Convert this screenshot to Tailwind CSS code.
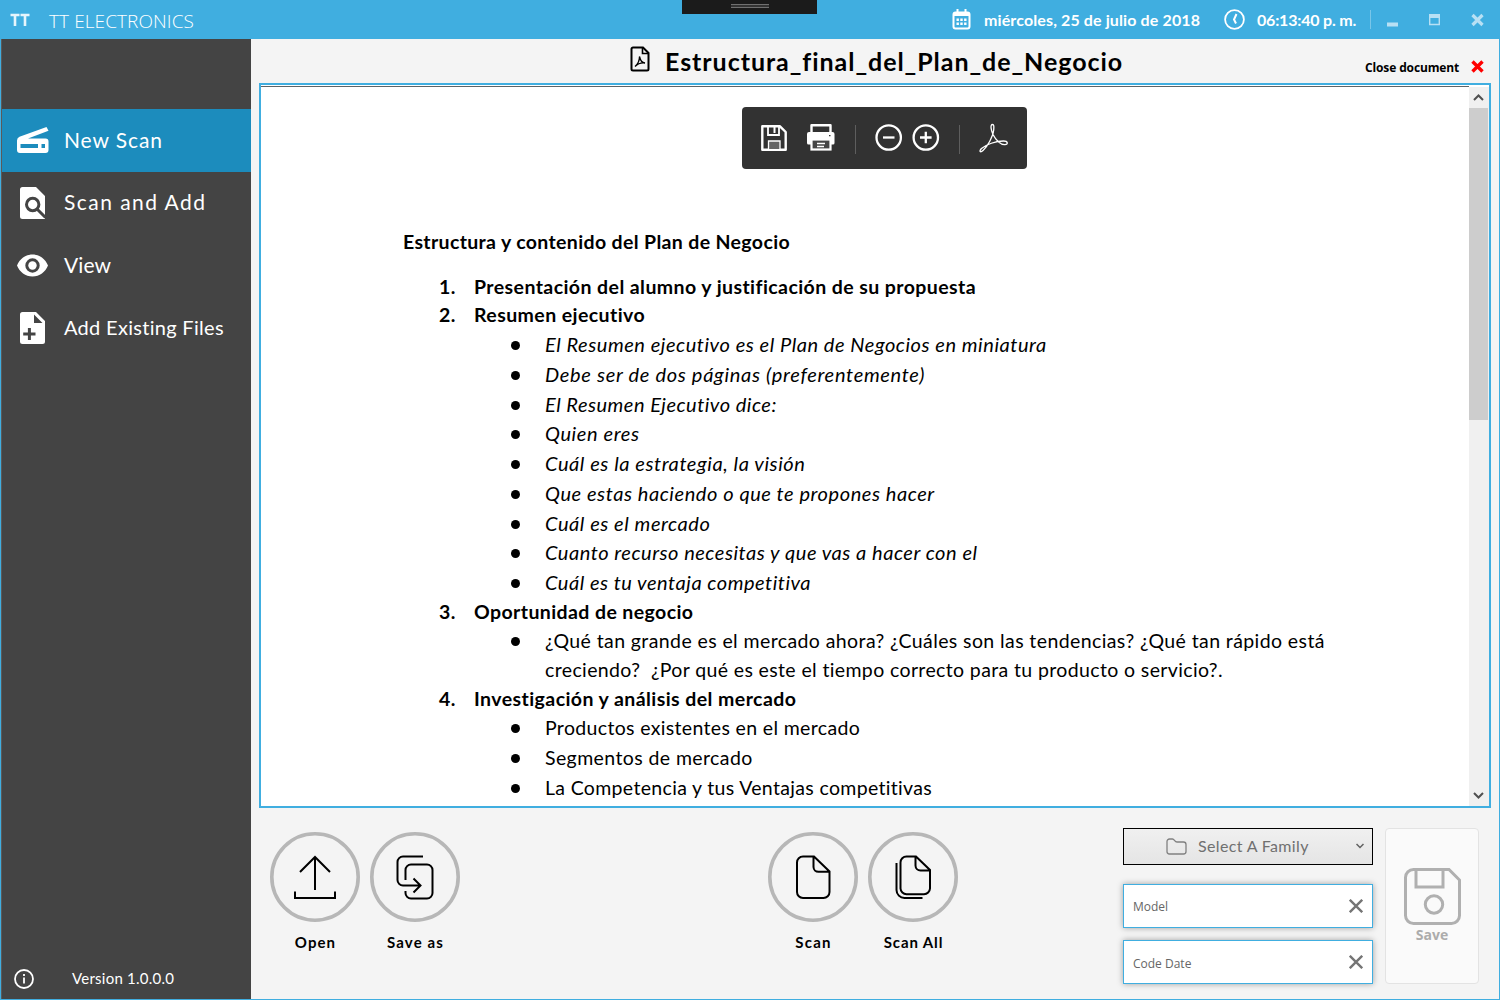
<!DOCTYPE html>
<html lang="es">
<head>
<meta charset="utf-8">
<title>TT Electronics</title>
<script src="https://cdn.jsdelivr.net/npm/@tailwindcss/browser@4"></script>
</head>
<body class="w-[1500px] h-[1000px] overflow-hidden bg-[#f4f4f4] font-[Lato,sans-serif] text-black">
<div class="relative flex h-full w-full flex-col">
  <header class="flex h-[39px] shrink-0 items-center bg-[#40aee0] text-white">
    <svg class="ml-2.5 h-[14px] w-5" viewBox="0 0 20 14" fill="none" stroke="#e6f5fc" stroke-width="2.6"><path d="M0.5 2H9.500M5 2V13M10.500 2H19.500M15 2V13"/></svg>
    <span class="ml-[19px] mt-[3px] font-['Open_Sans',sans-serif] text-[19px] font-light tracking-[0.09px] whitespace-nowrap">TT ELECTRONICS</span>
    <div class="ml-auto flex items-center">
      <svg class="h-[21px] w-[19px]" viewBox="0 0 19 21" fill="none" stroke="#fff" stroke-width="2"><rect x="1.500" y="3.500" width="16" height="16" rx="2"/><path d="M1 5.500H18" stroke-width="3"/><path d="M5.500 0V5M13.500 0V5" stroke-width="2"/><path d="M4.500 10.700H14.500M4.500 14.700H14.500" stroke-width="2.400" stroke-dasharray="2.400 1.400"/></svg>
      <span class="mt-px ml-[13px] w-[216px] text-[16px] font-bold tracking-[0.12px] whitespace-nowrap">miércoles, 25 de julio de 2018</span>
      <svg class="ml-[24px] h-[21px] w-[21px]" viewBox="0 0 21 21" fill="none" stroke="#fff" stroke-width="1.800"><circle cx="10.500" cy="10.500" r="9.400"/><path d="M12.500 5L10 10.500L12 14.500" stroke-width="2"/></svg>
      <span class="mt-px ml-3 w-[100px] text-[16px] font-bold tracking-[-0.2px] whitespace-nowrap">06:13:40 p. m.</span>
      <span class="ml-[13px] h-[19px] w-px bg-white/30"></span>
      <svg class="ml-4 h-4 w-[100px]" viewBox="0 0 100 16" fill="none" stroke="#b8e0f4"><path d="M0 12.500H11" stroke-width="4"/><path d="M42.700 3V12.500H52.300V3" stroke-width="1.400"/><path d="M42 4H53" stroke-width="4"/><path d="M85.500 3L95.500 13M95.500 3L85.500 13" stroke-width="3.200"/></svg>
      <span class="w-[13px]"></span>
    </div>
  </header>

  <div class="flex min-h-0 flex-1 border-x border-b border-[#40aee0]">
    <aside class="flex w-[250px] shrink-0 flex-col border-l border-[#5a5a5a] bg-[#444] pt-[70px] text-[21px] text-white">
      <div class="flex h-[63px] items-center bg-[#1c8cbd] pl-[15px]">
        <svg class="h-8 w-8" viewBox="0 0 32 32"><path fill="#fff" d="M29.500 2L31.500 5.800L11 13.500H28.500A3 3 0 0 1 31.500 16.500V25A3 3 0 0 1 28.500 28H3A3 3 0 0 1 0 25V15.500A4 4 0 0 1 2.500 11.800Z"/><path fill="#1c8cbd" d="M3.500 19H21V23H3.500ZM24.500 19H28V23H24.500Z"/></svg>
        <span class="mb-0.5 ml-[15px] tracking-[0.9px] whitespace-nowrap">New Scan</span>
      </div>
      <div class="flex h-[62px] items-center pl-[15px]">
        <svg class="h-8 w-8" viewBox="0 0 32 32"><path fill="#fff" d="M5.500 0H19L28 9V32H5.500A2.500 2.500 0 0 1 3 29.500V2.500A2.500 2.500 0 0 1 5.500 0Z"/><circle cx="15.700" cy="17.500" r="6.200" fill="none" stroke="#444" stroke-width="3"/><path d="M20 22L28.500 30.500" stroke="#444" stroke-width="3"/></svg>
        <span class="mb-0.5 ml-[15px] tracking-[1.45px] whitespace-nowrap">Scan and Add</span>
      </div>
      <div class="flex h-[63px] items-center pl-[15px]">
        <svg class="h-8 w-8" viewBox="0 0 32 32"><path fill="#fff" fill-rule="evenodd" d="M15.500 4.500C8.500 4.500 2.500 9 0 15.500C2.500 22 8.500 26.500 15.500 26.500S28.500 22 31 15.500C28.500 9 22.500 4.500 15.500 4.500ZM15.500 22.700A7.200 7.200 0 1 1 15.500 8.300A7.200 7.200 0 0 1 15.500 22.700Z"/><circle cx="15.500" cy="15.500" r="4.200" fill="#fff"/></svg>
        <span class="mb-0.5 ml-[15px] tracking-[0.1px] whitespace-nowrap">View</span>
      </div>
      <div class="flex h-[62px] items-center pl-[15px]">
        <svg class="h-8 w-8" viewBox="0 0 32 32"><path fill="#fff" d="M5.500 0H19L28 9V29.500A2.500 2.500 0 0 1 25.500 32H5.500A2.500 2.500 0 0 1 3 29.500V2.500A2.500 2.500 0 0 1 5.500 0Z"/><path fill="#444" d="M17 2.500V11H25.500ZM10.900 16H13.900V20.500H18.500V23.500H13.900V28H10.900V23.500H6.200V20.500H10.900Z"/></svg>
        <span class="mb-0.5 ml-[15px] text-[20px] tracking-[0.3px] whitespace-nowrap">Add Existing Files</span>
      </div>
      <div class="mt-auto flex h-10 items-center pl-3 text-[15px]">
        <svg class="h-5 w-5" viewBox="0 0 20 20" fill="none" stroke="#fff"><circle cx="10" cy="10" r="9" stroke-width="1.800"/><path d="M10 8.500V14.500M10 5V7" stroke-width="1.800"/></svg>
        <span class="mb-0.5 ml-[38px] tracking-[0.24px] whitespace-nowrap">Version 1.0.0.0</span>
      </div>
    </aside>

    <main class="flex min-w-0 flex-1 flex-col">
      <div class="flex h-11 shrink-0 items-center">
        <svg class="mb-1 ml-[379px] h-[26px] w-5" viewBox="0 0 20 26" fill="none" stroke="#000"><path d="M3 1.500H13L18.500 7V23A1.500 1.500 0 0 1 17 24.500H3A1.500 1.500 0 0 1 1.500 23V3A1.500 1.500 0 0 1 3 1.500Z" stroke-width="2"/><path d="M12.500 2V7.500H18" stroke-width="1.600"/><path d="M5 20.500C8 18 9.500 14 9.500 10.500C10.500 15 12 17 15 17C11.500 16.500 8 17.500 5 20.500Z" stroke-width="1.300"/></svg>
        <span class="ml-[15px] w-[457px] text-[25px] leading-9 font-bold tracking-[0.95px] whitespace-nowrap">Estructura_final_del_Plan_de_Negocio</span>
        <div class="ml-auto mt-3 mr-[15px] flex items-center">
          <span class="mt-0.5 w-[94px] font-['Open_Sans',sans-serif] text-[12px] font-bold tracking-[-0.13px] whitespace-nowrap">Close document</span>
          <svg class="mb-px ml-3 h-[13px] w-[13px]" viewBox="0 0 13 13" stroke="#f00" stroke-width="3.400"><path d="M1.500 1.500L11.500 11.500M11.500 1.500L1.500 11.500"/></svg>
        </div>
      </div>

      <section class="mr-2 ml-2 flex h-[725px] shrink-0 border-2 border-[#40aee0] bg-white">
        <div class="relative mt-px flex-1 overflow-hidden border-t border-[#5c6468] text-[19.5px]">
          <div class="absolute top-5 left-[481px] flex h-[62px] w-[285px] items-center rounded bg-[#323232]">
            <svg class="h-[62px] w-[285px]" viewBox="0 0 285 62" fill="none" stroke="#fff">
              <path d="M20.300 19.300H38L43.700 25V42.700H20.300Z" stroke-width="2.400" stroke-linejoin="round"/><path d="M26 20V28H37V20" stroke-width="1.800"/><path d="M32.500 20V26" stroke-width="2"/><path d="M26.500 42V34H38V42" fill="#646464" stroke-width="1.300"/>
              <path d="M69.500 26V18.300H88.500V26" stroke-width="2.400" stroke-linejoin="round"/><path fill="#fff" stroke="none" d="M67 25H90.500A2 2 0 0 1 92.500 27V36A1.500 1.500 0 0 1 91 37.500H66.500A1.500 1.500 0 0 1 65 36V27A2 2 0 0 1 67 25Z"/><rect x="69.500" y="32.500" width="19" height="10" fill="#464646" stroke-width="2.200"/><path d="M75 36.500H83M75 39.500H82" stroke-width="1.400"/><path d="M87 28.700H88.500" stroke="#323232" stroke-width="1.300"/>
              <path d="M113.500 18V47M217.500 18V47" stroke="#5e5e5e"/>
              <circle cx="146.700" cy="30.500" r="12.200" stroke-width="2.300"/><path d="M141 30.500H152.500" stroke-width="2.300"/>
              <circle cx="183.800" cy="30.500" r="12.200" stroke-width="2.300"/><path d="M178 30.500H189.600M183.800 24.700V36.300" stroke-width="2.300"/>
              <path d="M250.500 17.500C248 17.500 249 23 251 27.500C254 33.500 259 38 263 37.700C266.500 37.400 266 34 261.500 34C254 34 244 37.500 239.500 41.500C236.500 44.500 238.500 45.800 241 43.500C245.500 39.500 251 29.500 251.700 23C252 19.500 252 17.500 250.500 17.500Z" stroke-width="1.300"/>
            </svg>
          </div>

          <h1 class="mt-[141px] h-[45px] pl-[142px] leading-[28px] font-bold tracking-[0.35px] whitespace-nowrap">Estructura y contenido del Plan de Negocio</h1>
          <ol class="flex flex-col leading-[28px] tracking-[0.4px] whitespace-nowrap">
            <li class="flex h-7 pl-[178px] font-bold tracking-[0.42px]"><span class="w-[35px]">1.</span><span>Presentación del alumno y justificación de su propuesta</span></li>
            <li class="flex h-[30px] pl-[178px] font-bold tracking-[0.42px]"><span class="w-[35px]">2.</span><span>Resumen ejecutivo</span></li>
            <li class="flex h-[30px] pl-[250px] text-[20px] leading-[26px] tracking-[0.55px] italic"><i class="mt-[10px] mr-[25px] h-[9px] w-[9px] rounded-full bg-black"></i><span>El Resumen ejecutivo es el Plan de Negocios en miniatura</span></li>
            <li class="flex h-[30px] pl-[250px] text-[20px] leading-[26px] tracking-[0.7px] italic"><i class="mt-[10px] mr-[25px] h-[9px] w-[9px] rounded-full bg-black"></i><span>Debe ser de dos páginas (preferentemente)</span></li>
            <li class="flex h-[29px] pl-[250px] text-[20px] leading-[26px] tracking-[0.5px] italic"><i class="mt-[10px] mr-[25px] h-[9px] w-[9px] rounded-full bg-black"></i><span>El Resumen Ejecutivo dice:</span></li>
            <li class="flex h-[30px] pl-[250px] text-[20px] leading-[26px] tracking-[0.6px] italic"><i class="mt-[10px] mr-[25px] h-[9px] w-[9px] rounded-full bg-black"></i><span>Quien eres</span></li>
            <li class="flex h-[30px] pl-[250px] text-[20px] leading-[26px] tracking-[0.58px] italic"><i class="mt-[10px] mr-[25px] h-[9px] w-[9px] rounded-full bg-black"></i><span>Cuál es la estrategia, la visión</span></li>
            <li class="flex h-[30px] pl-[250px] text-[20px] leading-[26px] tracking-[0.57px] italic"><i class="mt-[10px] mr-[25px] h-[9px] w-[9px] rounded-full bg-black"></i><span>Que estas haciendo o que te propones hacer</span></li>
            <li class="flex h-[29px] pl-[250px] text-[20px] leading-[26px] tracking-[0.57px] italic"><i class="mt-[10px] mr-[25px] h-[9px] w-[9px] rounded-full bg-black"></i><span>Cuál es el mercado</span></li>
            <li class="flex h-[30px] pl-[250px] text-[20px] leading-[26px] tracking-[0.54px] italic"><i class="mt-[10px] mr-[25px] h-[9px] w-[9px] rounded-full bg-black"></i><span>Cuanto recurso necesitas y que vas a hacer con el</span></li>
            <li class="flex h-[29px] pl-[250px] text-[20px] leading-[26px] tracking-[0.53px] italic"><i class="mt-[10px] mr-[25px] h-[9px] w-[9px] rounded-full bg-black"></i><span>Cuál es tu ventaja competitiva</span></li>
            <li class="flex h-[29px] pl-[178px] font-bold"><span class="w-[35px]">3.</span><span>Oportunidad de negocio</span></li>
            <li class="flex h-[29px] pl-[250px]"><i class="mt-[10px] mr-[25px] h-[9px] w-[9px] rounded-full bg-black"></i><span>¿Qué tan grande es el mercado ahora? ¿Cuáles son las tendencias? ¿Qué tan rápido está</span></li>
            <li class="flex h-[29px] pl-[284px] tracking-[0.37px]"><span>creciendo?&nbsp; ¿Por qué es este el tiempo correcto para tu producto o servicio?.</span></li>
            <li class="flex h-[29px] pl-[178px] font-bold tracking-[0.43px]"><span class="w-[35px]">4.</span><span>Investigación y análisis del mercado</span></li>
            <li class="flex h-[30px] pl-[250px] tracking-[0.34px]"><i class="mt-[10px] mr-[25px] h-[9px] w-[9px] rounded-full bg-black"></i><span>Productos existentes en el mercado</span></li>
            <li class="flex h-[30px] pl-[250px]"><i class="mt-[10px] mr-[25px] h-[9px] w-[9px] rounded-full bg-black"></i><span>Segmentos de mercado</span></li>
            <li class="flex h-[28px] pl-[250px] tracking-[0.33px]"><i class="mt-[10px] mr-[25px] h-[9px] w-[9px] rounded-full bg-black"></i><span>La Competencia y tus Ventajas competitivas</span></li>
          </ol>
        </div>
        <div class="mt-0.5 flex w-5 flex-col items-center bg-[#f0f0f0] pr-px">
          <svg class="h-[21px] w-[19px] shrink-0" viewBox="0 0 19 21" fill="none" stroke="#505050" stroke-width="2"><path d="M5 13L9.500 8.500L14 13"/></svg>
          <div class="h-[312px] w-[19px] shrink-0 bg-[#cdcdcd]"></div>
          <svg class="mt-auto h-[21px] w-[19px] shrink-0" viewBox="0 0 19 21" fill="none" stroke="#505050" stroke-width="2"><path d="M5 8L9.500 12.500L14 8"/></svg>
        </div>
      </section>

      <footer class="flex min-h-0 flex-1 text-[15px] font-bold">
        <div class="mt-6 ml-[19px] flex w-[90px] flex-col items-center">
          <svg class="h-[90px] w-[90px]" viewBox="0 0 90 90" fill="none" stroke="#000" stroke-width="2"><circle cx="45" cy="45" r="43.200" stroke="#b7b7b7" stroke-width="3.600"/><path d="M45 25V58M30 40L45 25L60 40M25 59.500V66H65V59.500"/></svg>
          <span class="mt-[9px] pl-px leading-[22px] tracking-[1.1px] whitespace-nowrap">Open</span>
        </div>
        <div class="mt-6 ml-2.5 flex w-[90px] flex-col items-center">
          <svg class="h-[90px] w-[90px]" viewBox="0 0 90 90" fill="none" stroke="#000" stroke-width="2"><circle cx="45" cy="45" r="43.200" stroke="#b7b7b7" stroke-width="3.600"/><path d="M53 24.500H33A5.500 5.500 0 0 0 27.500 30V48A5.500 5.500 0 0 0 33 53.500H50M43.500 46.500L50.500 53.500L43.500 60.500M35.500 48V38A5.500 5.500 0 0 1 41 32.500H57A5.500 5.500 0 0 1 62.500 38V61A5.500 5.500 0 0 1 57 66.500H41A5.500 5.500 0 0 1 35.500 61V59"/></svg>
          <span class="mt-[9px] pl-px leading-[22px] tracking-[1.1px] whitespace-nowrap">Save as</span>
        </div>
        <div class="mt-6 ml-[308px] flex w-[90px] flex-col items-center">
          <svg class="h-[90px] w-[90px]" viewBox="0 0 90 90" fill="none" stroke="#000" stroke-width="2"><circle cx="45" cy="45" r="43.200" stroke="#b7b7b7" stroke-width="3.600"/><path d="M35 24.500H46L61.500 39.500V60A6 6 0 0 1 55.500 66H35A6 6 0 0 1 29 60V30.500A6 6 0 0 1 35 24.500M45.500 25V35A5 5 0 0 0 50.500 39.800H61.500"/></svg>
          <span class="mt-[9px] pl-px leading-[22px] tracking-[1.2px] whitespace-nowrap">Scan</span>
        </div>
        <div class="mt-6 ml-2.5 flex w-[90px] flex-col items-center">
          <svg class="h-[90px] w-[90px]" viewBox="0 0 90 90" fill="none" stroke="#000" stroke-width="2"><circle cx="45" cy="45" r="43.200" stroke="#b7b7b7" stroke-width="3.600"/><path d="M38.500 24.500H48L62 38V56.500A6 6 0 0 1 56 62.200H38.500A6 6 0 0 1 32.500 56.500V30.500A6 6 0 0 1 38.500 24.500M47.500 25V33.500A5 5 0 0 0 52.500 38.500H62M28.500 31V58A8 8 0 0 0 36.500 66H54.500"/></svg>
          <span class="mt-[9px] pl-px leading-[22px] tracking-[0.9px] whitespace-nowrap">Scan All</span>
        </div>
        <div class="mt-5 ml-[165px] flex w-[250px] flex-col font-['Open_Sans',sans-serif] text-[12px] font-normal text-[#666]">
          <div class="flex h-[37px] items-center border border-black bg-linear-to-b from-[#f0f0f0] to-[#e5e5e5] pl-[42px] font-[Lato,sans-serif] text-[16px] text-[#707070]">
            <svg class="h-[17px] w-[21px]" viewBox="0 0 21 17" fill="none" stroke="#808080" stroke-width="1.300"><path d="M1 3.500A2.500 2.500 0 0 1 3.500 1H6.500C8.500 1 8.500 4 11 4H17.500A2.500 2.500 0 0 1 20 6.500V13.500A2.500 2.500 0 0 1 17.500 16H3.500A2.500 2.500 0 0 1 1 13.500Z"/></svg>
            <span class="mb-0.5 ml-[11px] tracking-[0.35px] whitespace-nowrap">Select A Family</span>
            <svg class="mr-2 mb-0.5 ml-auto h-[6px] w-[8px]" viewBox="0 0 8 6" fill="none" stroke="#606060" stroke-width="1.500"><path d="M0.500 1L4 4.500L7.500 1"/></svg>
          </div>
          <div class="mt-[19px] flex h-11 items-center border border-[#40aee0] bg-white pr-[9px] pl-[9px] shadow-[0_0_6px_rgba(0,0,0,0.35)]">
            <span class="mt-0.5 whitespace-nowrap">Model</span>
            <svg class="ml-auto h-[14px] w-[14px]" viewBox="0 0 14 14" stroke="#757575" stroke-width="2.400"><path d="M0.800 0.800L13.200 13.200M13.200 0.800L0.800 13.200"/></svg>
          </div>
          <div class="mt-3 flex h-11 items-center border border-[#40aee0] bg-white pr-[9px] pl-[9px] shadow-[0_0_6px_rgba(0,0,0,0.35)]">
            <span class="mt-1 whitespace-nowrap">Code Date</span>
            <svg class="ml-auto h-[14px] w-[14px]" viewBox="0 0 14 14" stroke="#757575" stroke-width="2.400"><path d="M0.800 0.800L13.200 13.200M13.200 0.800L0.800 13.200"/></svg>
          </div>
        </div>
        <div class="mt-5 ml-3 flex h-[156px] w-[94px] flex-col items-center rounded border border-[#e3e3e3] bg-[#fafafa] pt-[39px] font-['Open_Sans',sans-serif] text-[#acacac]">
          <svg class="h-[57px] w-[57px]" viewBox="0 0 57 57" fill="none" stroke="#b0b0b0" stroke-width="3"><path d="M9.500 1.500H45L55.500 12V47.500A8 8 0 0 1 47.500 55.500H9.500A8 8 0 0 1 1.500 47.500V9.500A8 8 0 0 1 9.500 1.500ZM12 2V19H39V2"/><circle cx="30" cy="36.500" r="8.700"/></svg>
          <span class="text-[14px] leading-5 font-bold">Save</span>
        </div>
      </footer>
    </main>
  </div>

  <div class="absolute top-0 left-[682px] flex h-[14px] w-[135px] flex-col items-center bg-[#1b1b1b] pt-1"><i class="h-1 w-[38px] border-y border-[#707070] bg-[#333]"></i></div>
</div>
</body>
</html>
